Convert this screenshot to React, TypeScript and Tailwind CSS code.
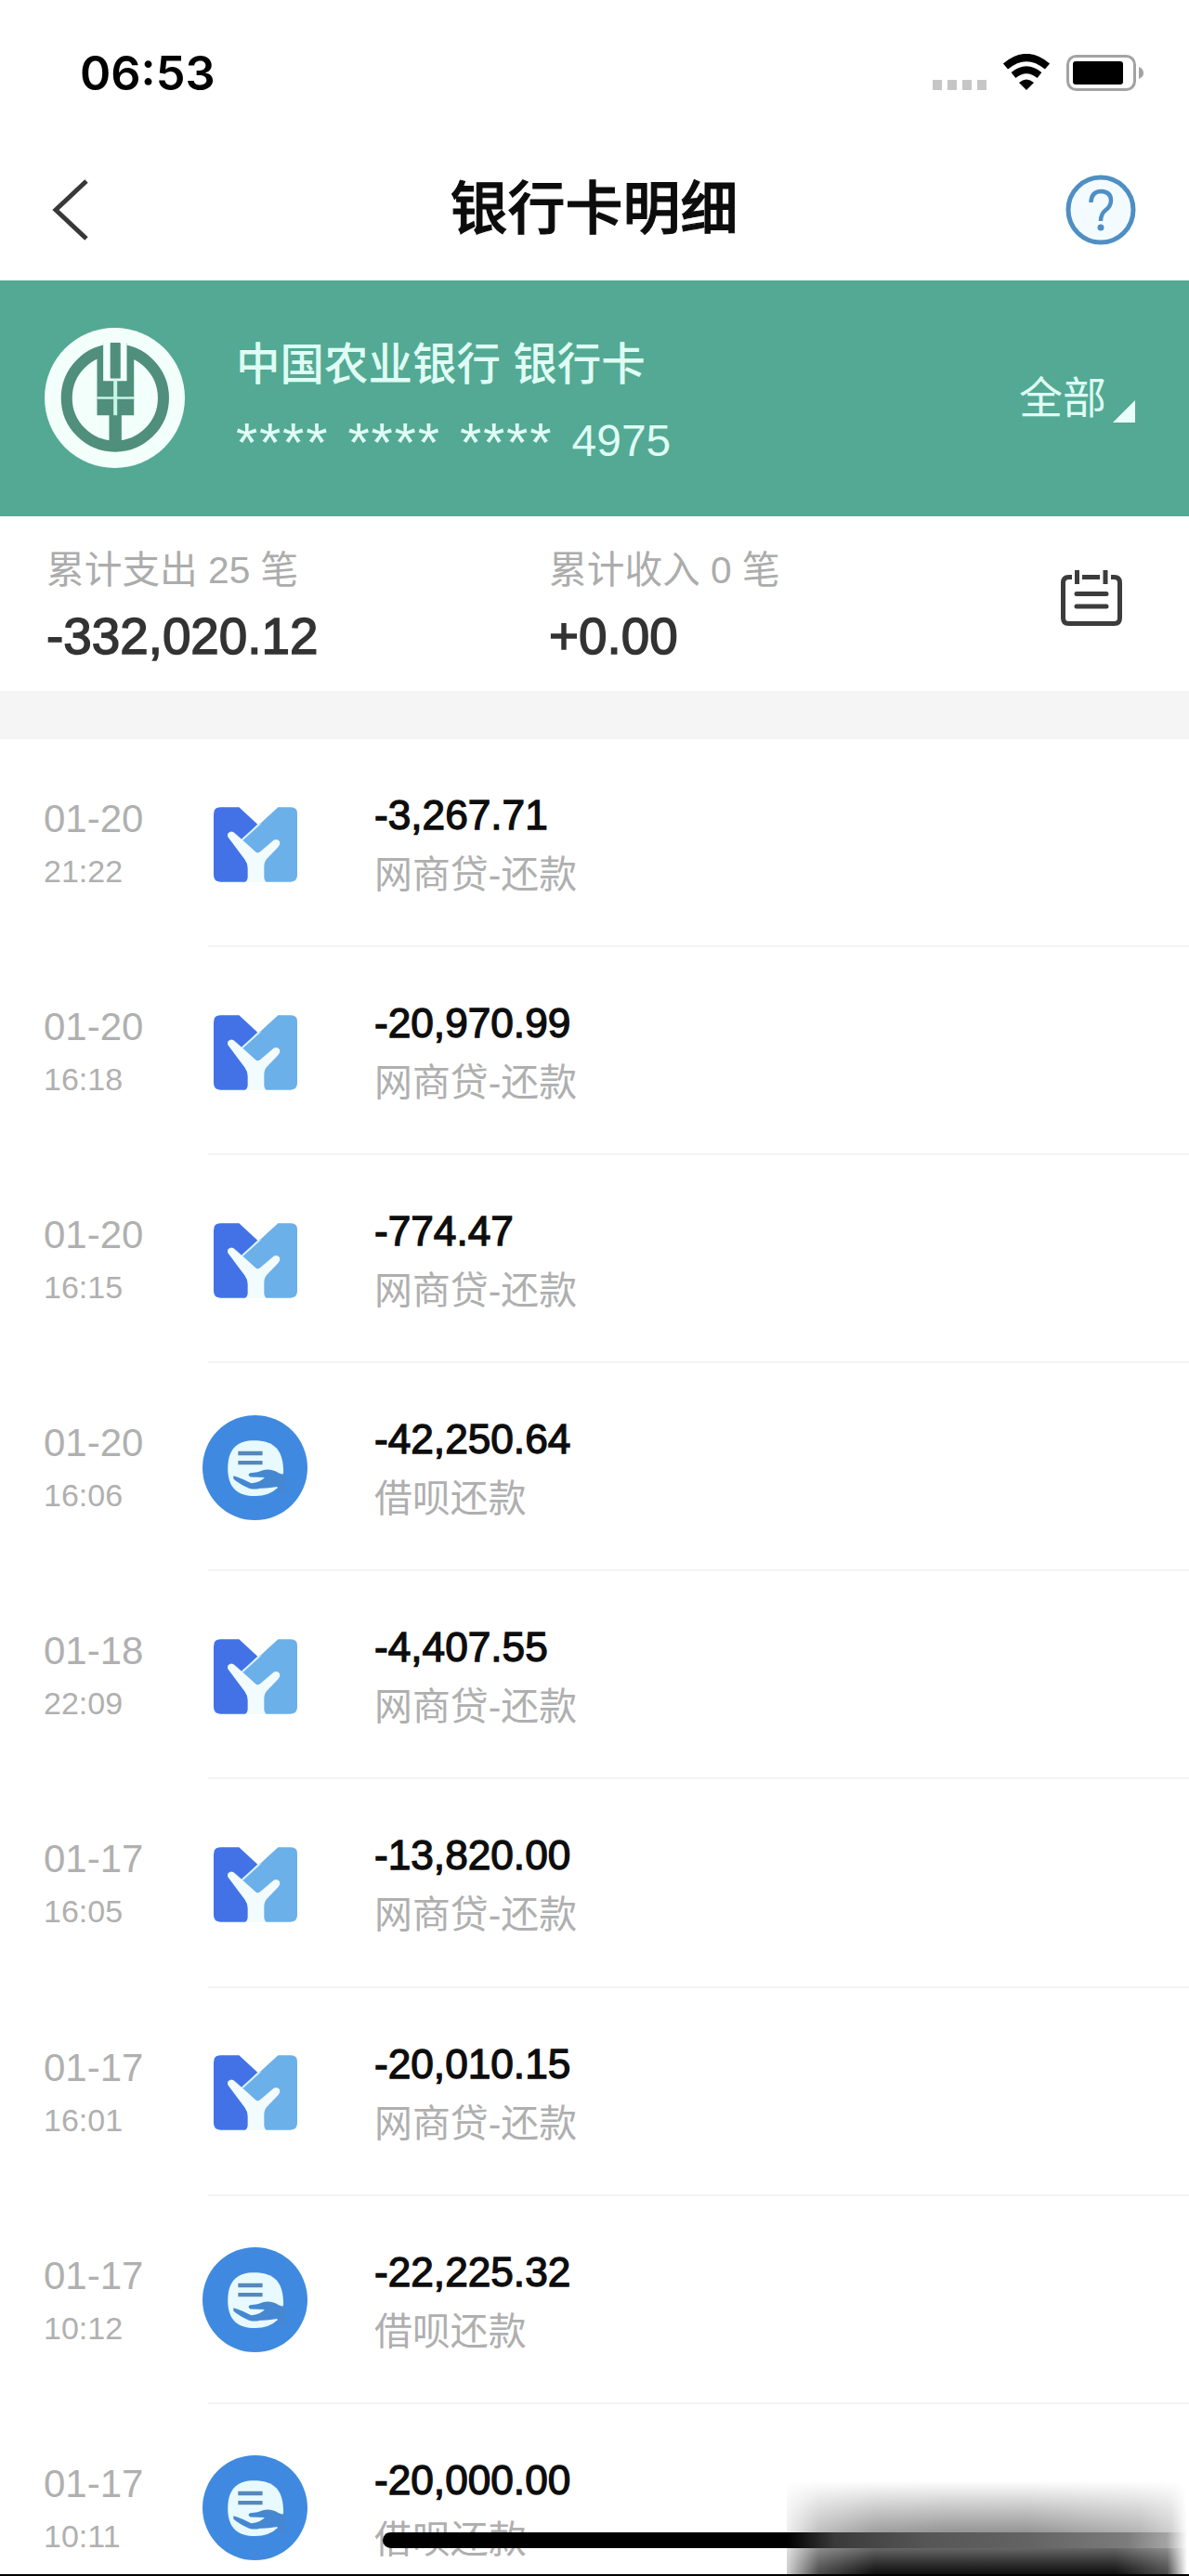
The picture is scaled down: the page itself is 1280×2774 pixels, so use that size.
import clsx from "clsx";

type TxKind = "mybank" | "jiebei";

interface Transaction {
  date: string;
  time: string;
  kind: TxKind;
  amount: string;
}

const transactions: Transaction[] = [
  { date: "01-20", time: "21:22", kind: "mybank", amount: "-3,267.71" },
  { date: "01-20", time: "16:18", kind: "mybank", amount: "-20,970.99" },
  { date: "01-20", time: "16:15", kind: "mybank", amount: "-774.47" },
  { date: "01-20", time: "16:06", kind: "jiebei", amount: "-42,250.64" },
  { date: "01-18", time: "22:09", kind: "mybank", amount: "-4,407.55" },
  { date: "01-17", time: "16:05", kind: "mybank", amount: "-13,820.00" },
  { date: "01-17", time: "16:01", kind: "mybank", amount: "-20,010.15" },
  { date: "01-17", time: "10:12", kind: "jiebei", amount: "-22,225.32" },
  { date: "01-17", time: "10:11", kind: "jiebei", amount: "-20,000.00" },
];

const kindLabel: Record<TxKind, string> = {
  mybank: "网商贷-还款",
  jiebei: "借呗还款",
};

function MyBankIcon() {
  return (
    <svg viewBox="90 88 270 241" className="mt-[2px] h-[81px] w-[90px]">
      <path d="M112 88H172L232 143L182 194L226 240V329H112Q90 329 90 307V110Q90 88 112 88Z" fill="#4272e6" />
      <path d="M298 88H340Q360 88 360 108V307Q360 329 338 329H226V240L182 194Z" fill="#6cb0e9" />
      <path d="M182 193L240 140" stroke="#d9f3ff" strokeWidth="6" />
      <path
        d="M136 184Q132 172 142 168Q150 164 160 173L228 234Q234 236 240 232L283 195Q296 188 303 199Q306 208 298 217L262 254Q253 264 253 280V316Q254 325 260 330H192Q199 325 200 316V284Q200 270 190 256Z"
        fill="#f2fbfe"
      />
    </svg>
  );
}

function JiebeiIcon() {
  return (
    <svg viewBox="56 69 336 336" className="h-[113px] w-[113px]">
      <circle cx="224" cy="237" r="168" fill="#3f8ae0" />
      <path d="M220 150C286 150 315 180 315 252L296 302Q270 328 224 328C165 328 137 298 137 239S165 150 220 150Z" fill="#e8faff" />
      <path d="M170 191H248M170 221H248" stroke="#5688b8" strokeWidth="13" />
      <path
        d="M155 263Q184 272 212 287Q242 284 255 268L210 267Q198 261 208 254Q235 252 249 245Q275 238 300 254L322 262V318L292 318Q299 306 295 298Q262 304 240 303Q222 308 205 303Q180 294 155 273Z"
        fill="#4687d2"
      />
    </svg>
  );
}

function BankLogo() {
  return (
    <svg viewBox="144 159 452 452" className="h-[151px] w-[151px] shrink-0">
      <circle cx="370" cy="385" r="226" fill="#f3fffb" />
      <circle cx="371" cy="385" r="156" fill="none" stroke="#4f8f7b" strokeWidth="36" />
      <path d="M313 222H333V207H409V222H432V441H392V550H352V441H313Z" fill="#4f8f7b" />
      <path d="M333 200H356V322H388V200H409V330H333Z" fill="#f3fffb" />
      <path d="M356 210H388V321H356Z" fill="#4f8f7b" />
      <path d="M372 325V441" stroke="#c8f5e6" strokeWidth="12" />
      <path d="M313 385H432" stroke="#c8f5e6" strokeWidth="7" />
    </svg>
  );
}

function StatusBar() {
  return (
    <div className="flex h-[150px] shrink-0 items-start justify-between pl-[86px] pr-[49px] pt-[49px]">
      <span className="font-['Inter'] text-[50.500px] font-semibold leading-[60px] text-black">06:53</span>
      <div className="flex pt-[9px]">
        <div className="mt-[28px] flex gap-[6px]">
          {[0, 1, 2, 3].map((dot) => (
            <i key={dot} className="h-[11px] w-[10px] bg-[#c6c6c6]" />
          ))}
        </div>
        <svg viewBox="0 0 52 39" className="ml-[17px] h-[39px] w-[52px]">
          <path d="M3.500 13.500Q26 -5.500 48.500 13.500" fill="none" stroke="#000" strokeWidth="8" />
          <path d="M12 23Q26 11.500 40 23" fill="none" stroke="#000" strokeWidth="7.500" />
          <path d="M18 31Q26 24 34 31L26 39Z" />
        </svg>
        <svg viewBox="0 0 83 40" className="ml-[17px] h-[40px] w-[83px]">
          <rect x="1.500" y="2.500" width="72" height="36" rx="9" fill="none" stroke="#a3a3a3" strokeWidth="3" />
          <rect x="7" y="8" width="54" height="25" rx="3" />
          <path d="M78 14Q83 16 83 20.500T78 27Z" fill="#a3a3a3" />
        </svg>
      </div>
    </div>
  );
}

function TitleBar() {
  return (
    <div className="flex h-[152px] shrink-0 items-center justify-between pl-[55px] pr-[57px]">
      <svg viewBox="0 0 40 68" className="h-[68px] w-[77px]" preserveAspectRatio="xMinYMid meet">
        <path d="M38 3L5 34L38 65" fill="none" stroke="#383838" strokeWidth="5" />
      </svg>
      <h1 className="text-[62px] font-medium leading-[76px] text-[#0c0c0c] [-webkit-text-stroke:1px_#0c0c0c]">
        银行卡明细
      </h1>
      <svg viewBox="0 0 76 76" className="h-[76px] w-[76px]">
        <circle cx="38" cy="38" r="35" fill="#f4fbff" stroke="#4e8fc4" strokeWidth="5" />
        <path
          d="M27.500 30Q28 18 38.500 18Q49 18.500 49 28Q49 34 43 38.500Q38 42.500 38 50"
          fill="none"
          stroke="#4e8fc4"
          strokeWidth="4.500"
        />
        <circle cx="38" cy="57" r="3.500" fill="#4e8fc4" />
      </svg>
    </div>
  );
}

function CardHeader() {
  return (
    <div className="flex h-[254px] shrink-0 items-start bg-[#53a993] pl-[48px] pr-[58px] pt-[51px] text-[#dffdf4]">
      <BankLogo />
      <div className="ml-[55px] mt-[10px] flex-1">
        <p className="text-[47.500px] font-medium leading-[60px]">中国农业银行 银行卡</p>
        <div className="mt-[22px] flex text-[48px] leading-[60px]">
          {[0, 1, 2].map((group) => (
            <span key={group} className="mt-[2px] w-[120.500px] text-[60px] tracking-[1.700px]">
              ****
            </span>
          ))}
          <span>4975</span>
        </div>
      </div>
      <div className="mt-[46px] flex">
        <span className="text-[47px] leading-[60px]">全部</span>
        <svg viewBox="0 0 24 24" className="ml-[7px] mt-[32px] h-[24px] w-[24px]">
          <path d="M24 0V24H0Z" fill="#e9fffa" />
        </svg>
      </div>
    </div>
  );
}

function Summary() {
  return (
    <div className="flex h-[188px] shrink-0 items-start pl-[50px] pr-[72px] pt-[33px]">
      <div className="w-[541px]">
        <p className="text-[40.700px] leading-[50px] text-[#acacac]">累计支出 25 笔</p>
        <p className="mt-[16px] text-[54.800px] leading-[60px] text-[#333] [-webkit-text-stroke:1.500px_#333]">-332,020.12</p>
      </div>
      <div className="flex-1">
        <p className="text-[40.700px] leading-[50px] text-[#acacac]">累计收入 0 笔</p>
        <p className="mt-[16px] text-[54.800px] leading-[60px] text-[#333] [-webkit-text-stroke:1.500px_#333]">+0.00</p>
      </div>
      <svg viewBox="0 0 66 60" className="mt-[25px] h-[60px] w-[66px]" fill="none" stroke="#3c3c3c" strokeWidth="5">
        <path d="M12 7.500H8.500Q2.500 7.500 2.500 13.500V51.500Q2.500 57.500 8.500 57.500H57.500Q63.500 57.500 63.500 51.500V13.500Q63.500 7.500 57.500 7.500H54M23 7.500H42" />
        <path d="M17.500 0V15M48 0V15" />
        <path d="M17 25.500H49M17 39H49" strokeLinecap="round" />
      </svg>
    </div>
  );
}

function TransactionRow({ tx, last }: { tx: Transaction; last: boolean }) {
  return (
    <div className="flex h-[224.100px] shrink-0">
      <div className="w-[218px] pl-[47px] pt-[61px] text-[#b0b0b0]">
        <p className="text-[42px] leading-[50px]">{tx.date}</p>
        <p className="mt-[11px] text-[34px] leading-[40px]">{tx.time}</p>
      </div>
      <div className="flex w-[113px] items-center justify-center">
        {tx.kind === "mybank" ? <MyBankIcon /> : <JiebeiIcon />}
      </div>
      <div className="flex-1 pl-[72px] pt-[57px]">
        <p className="text-[44.200px] leading-[50px] text-[#0d0d0d] [-webkit-text-stroke:1.300px_#0d0d0d]">{tx.amount}</p>
        <p className="mt-[14px] text-[40.900px] leading-[50px] text-[#afafaf]">{kindLabel[tx.kind]}</p>
      </div>
      {/* divider starts under the icon column */}
      <i className={clsx("-ml-[1056px] w-[1056px] self-end", !last && "h-[2px] bg-[#f3f3f4]")} />
    </div>
  );
}

export default function App() {
  return (
    <div className="relative flex h-[2774px] w-[1280px] flex-col overflow-hidden bg-white font-['Liberation_Sans','Noto_Sans_CJK_SC',sans-serif]">
      <StatusBar />
      <TitleBar />
      <CardHeader />
      <Summary />
      <div className="h-[52px] shrink-0 bg-[#f5f5f6]" />
      {transactions.map((tx, index) => (
        <TransactionRow key={index} tx={tx} last={index === transactions.length - 1} />
      ))}

      {/* Home indicator */}
      <div className="absolute bottom-[30px] left-[412px] h-[17px] w-[436px] rounded-l-full bg-black" />

      {/* Smudged corner over the indicator */}
      <div className="absolute bottom-[2px] right-[2px] flex w-[431px] flex-col">
        <div className="h-[55px] bg-linear-to-b from-[#ffffff] to-[#959595] [mask-image:linear-gradient(to_right,rgba(0,0,0,0.150),rgba(0,0,0,0.600)_8%,rgba(0,0,0,0.900)_22%,black_40%,black_60%,rgba(0,0,0,0.700)_88%,rgba(0,0,0,0.450)_96%,transparent)]" />
        <div className="h-[17px] bg-[linear-gradient(to_right,#000,#3a3a3a_12%,#565656_35%,#636363_60%,#7c7c7c_85%,#a5a5a5_95%,#fff)]" />
        <div className="h-[28px] bg-linear-to-b from-[#666] to-[#101010] [mask-image:linear-gradient(to_right,rgba(0,0,0,0.200),rgba(0,0,0,0.750)_8%,black_22%,black_82%,rgba(0,0,0,0.750)_95%,transparent)]" />
      </div>
      <div className="absolute bottom-0 left-0 h-[2px] w-full bg-black" />
    </div>
  );
}
